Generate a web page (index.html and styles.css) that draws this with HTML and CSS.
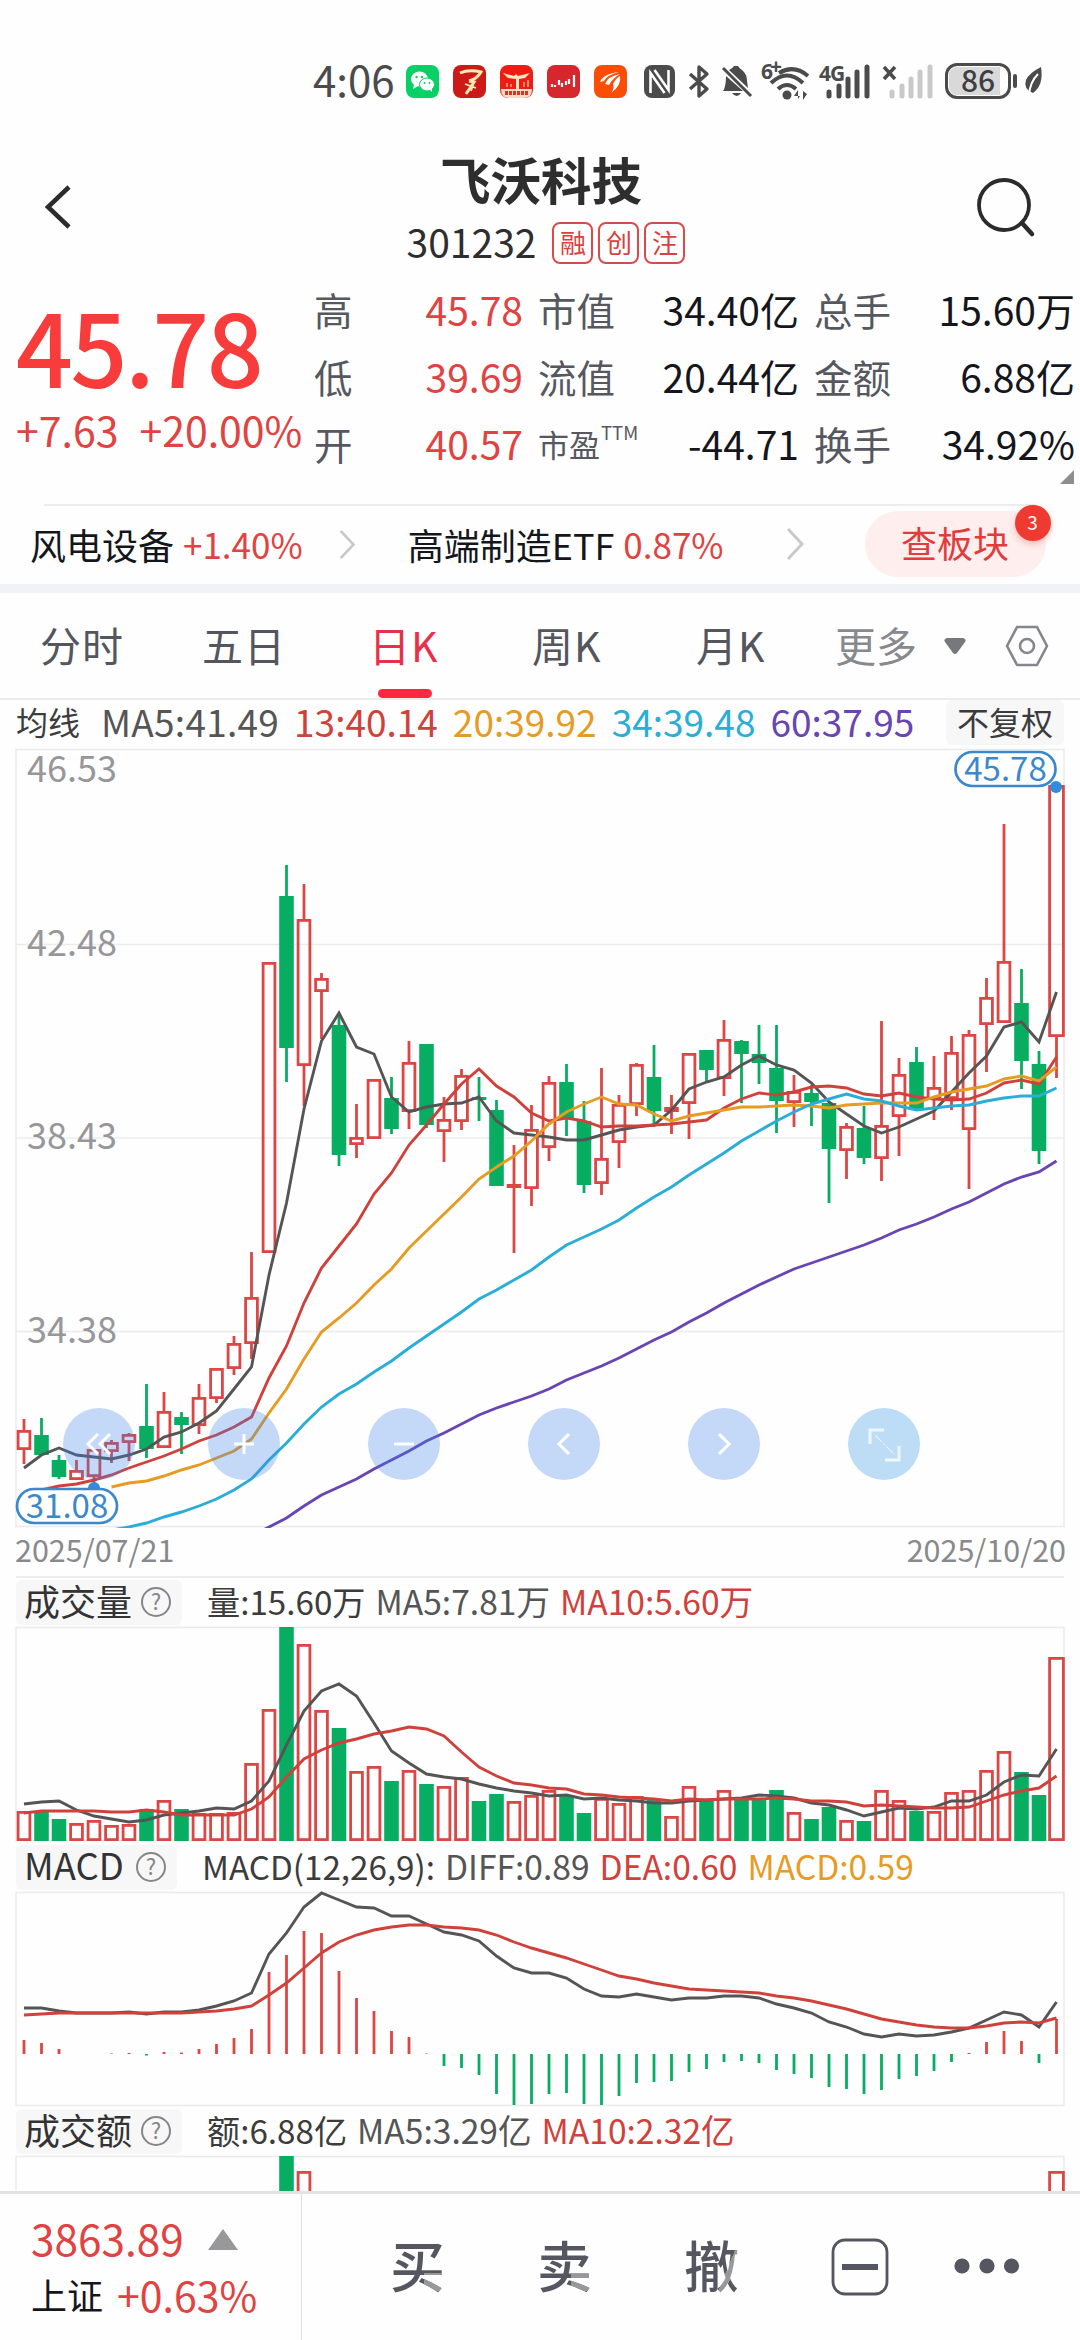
FILE: index.html
```html
<!DOCTYPE html>
<html lang="zh-CN">
<head>
  <meta charset="UTF-8">
  <meta name="viewport" content="width=device-width, initial-scale=1.0">
  <title>飞沃科技 301232</title>
  <link rel="stylesheet" href="styles.css">
</head>
<body>
  <div class="phone">
    <div class="status-bar">
      <span class="clock">4:06</span>
      <svg class="app-icon" viewBox="0 0 33 33"><rect width="33" height="33" rx="8" fill="#07d067"/><ellipse cx="13.500" cy="14" rx="8.500" ry="7.500" fill="#fff"/><path d="M8 19l-1 5 5-3z" fill="#fff"/><ellipse cx="21" cy="19.500" rx="7.500" ry="6.500" fill="#fff" stroke="#07d067"/><path d="M24 25l2 2 0-4z" fill="#fff"/><g fill="#07d067"><circle cx="10.500" cy="12" r="1.200"/><circle cx="16" cy="12" r="1.200"/><circle cx="18.500" cy="18" r="1"/><circle cx="23.500" cy="18" r="1"/></g></svg>
      <svg class="app-icon" viewBox="0 0 33 33"><rect width="33" height="33" rx="8" fill="#cb1a18"/><path d="M7 8q9-4 21-1-4 7-12 9M16 16l5 1-8 12" fill="none" stroke="#ffe9b0" stroke-width="3"/><path d="M12 19l11 4M21 17l-3 9" stroke="#ffe9b0" stroke-width="1.800"/></svg>
      <svg class="app-icon" viewBox="0 0 33 33"><rect width="33" height="33" rx="8" fill="#ee1c12"/><path d="M1 24h31q0 9-8 9H9q-8 0-8-9z" fill="#fbd9c8"/><path d="M3 8l11 3 2-2 2 2 12-3-5 5-6 1v10h-3V14l-8-1z" fill="#ffe4c0"/><path d="M5 28h23" stroke="#d8361f" stroke-width="4" stroke-dasharray="3 1"/><path d="M7 22v-4M11 22v-3M24 22v-5M28 22v-7" stroke="#fb8b6a" stroke-width="2"/></svg>
      <svg class="app-icon" viewBox="0 0 33 33"><rect width="33" height="33" rx="8" fill="#d8262e"/><path d="M5 22v-3M8 22v-2M12 20v-5M15 22v-4M19 20v-4M22 19v-5M27 22v-12" stroke="#fff" stroke-width="2.200"/></svg>
      <svg class="app-icon" viewBox="0 0 33 33"><rect width="33" height="33" rx="8" fill="#fb4d06"/><path d="M6 17q3-8 19-10q-12 3-15 9zM11 19q3-8 15-10q-7 4-11 11zM17 28q4-5 2-9 3-6 7-8 2 9-9 17z" fill="#fff"/></svg>
      <svg class="nfc" viewBox="0 0 31 33"><rect width="31" height="33" rx="8" fill="#4b4b4b"/><path d="M6.500 28V8l14 20M24.500 5v20L10.500 5" fill="none" stroke="#fff" stroke-width="2.600"/></svg>
      <svg class="bt" viewBox="0 0 22 33"><path d="M2 9l17 15-8 7V2l8 7L2 24" fill="none" stroke="#4b4b4b" stroke-width="3.400" stroke-linejoin="round"/></svg>
      <svg class="mute" viewBox="0 0 31 33"><path d="M8 5q4-2 5-4h4q1 2 4 4 5 4 5 11l1 7zM5 11l17 15H2q3-4 3-15zM11 28h9q-4 6-9 0z" fill="#4b4b4b"/><path d="M2 3l28 28" stroke="#4b4b4b" stroke-width="3"/></svg>
      <svg class="wifi" viewBox="0 0 49 37"><text x="0" y="16" class="net-label">6</text><text x="9" y="11" class="net-label">+</text><g fill="none" stroke="#4b4b4b" stroke-width="4"><path d="M18 10q15-9 29 3"/><path d="M10 20q16-15 32 0"/><path d="M17 26q9-8 18 0"/></g><circle cx="26" cy="32" r="4.500" fill="#4b4b4b"/><path d="M37 36v-9l-4 6h6M42 28v9l4-6z" fill="#4b4b4b"/></svg>
      <svg class="signal" viewBox="0 0 52 36"><text x="0" y="18" class="net-label">4G</text><path d="M10 33v-4M20 33V23M29 33V16M38 33V9M48 33V4" stroke="#4b4b4b" stroke-width="5" stroke-linecap="round"/></svg>
      <svg class="signal-off" viewBox="0 0 51 36"><path d="M2 4l11 12M13 4L2 16" stroke="#4b4b4b" stroke-width="3.500"/><path d="M10 33v-4M20 33V23M29 33V16M38 33V9M48 33V4" stroke="#c9c9c9" stroke-width="5" stroke-linecap="round"/></svg>
      <div class="battery"><span>86</span></div>
      <i class="battery-tip"></i>
      <svg class="leaf" viewBox="0 0 18 28"><path d="M17 0q3 18-8 26Q-1 22 2 13 5 6 17 0z" fill="#4b4b4b"/><path d="M14 7Q6 15 5 28" fill="none" stroke="#fff" stroke-width="2"/></svg>
    </div>

    <header class="title-bar">
      <svg class="back" viewBox="0 0 30 48"><path d="M26 4L5 24l21 20" fill="none" stroke="#2b2b2b" stroke-width="4.500"/></svg>
      <div class="title-block">
        <h1>飞沃科技</h1>
        <div class="code-row"><span class="code">301232</span><b>融</b><b>创</b><b>注</b></div>
      </div>
      <svg class="search" viewBox="0 0 60 60"><circle cx="27" cy="27" r="25" fill="none" stroke="#2b2b2b" stroke-width="3.800"/><path d="M45 45l10 11" stroke="#2b2b2b" stroke-width="4.500" stroke-linecap="round"/></svg>
    </header>

    <section class="quote">
      <div class="price-block">
        <div class="price">45.78</div>
        <div class="change"><span>+7.63</span><span>+20.00%</span></div>
      </div>
      <div class="stats">
        <span class="lab">高</span><span class="val up">45.78</span><span class="lab">市值</span><span class="val">34.40亿</span><span class="lab">总手</span><span class="val">15.60万</span>
        <span class="lab">低</span><span class="val up">39.69</span><span class="lab">流值</span><span class="val">20.44亿</span><span class="lab">金额</span><span class="val">6.88亿</span>
        <span class="lab">开</span><span class="val up">40.57</span><span class="lab small">市盈<sup>TTM</sup></span><span class="val">-44.71</span><span class="lab">换手</span><span class="val">34.92%</span>
      </div>
      <i class="corner"></i>
    </section>

    <section class="boards">
      <span class="board-name">风电设备</span><span class="board-pct">+1.40%</span>
      <svg class="arrow first" viewBox="0 0 20 34"><path d="M2 2l14 15L2 32" fill="none" stroke="#c9c9cb" stroke-width="3"/></svg>
      <span class="board-name">高端制造ETF</span><span class="board-pct">0.87%</span>
      <svg class="arrow second" viewBox="0 0 20 34"><path d="M2 2l14 15L2 32" fill="none" stroke="#c9c9cb" stroke-width="3"/></svg>
      <span class="board-btn">查板块<em>3</em></span>
    </section>

    <nav class="tabs">
      <span>分时</span><span>五日</span><span class="active">日K</span><span>周K</span><span>月K</span>
      <span class="more">更多</span>
      <svg class="caret" viewBox="0 0 22 16"><path d="M3 0h16q4 1 2 4l-8 11q-2 2-4 0L1 4Q-1 1 3 0z" fill="#77787e"/></svg>
      <svg class="hex" viewBox="0 0 44 42"><path d="M12 2h20l10 19-10 19H12L2 21z" fill="none" stroke="#85868b" stroke-width="2.600" stroke-linejoin="round"/><circle cx="22" cy="21" r="7" fill="none" stroke="#85868b" stroke-width="2.600"/></svg>
    </nav>

    <section class="ma-row">
      <span class="ma-title">均线</span>
      <span class="c5">MA5:41.49</span><span class="c13">13:40.14</span><span class="c20">20:39.92</span><span class="c34">34:39.48</span><span class="c60">60:37.95</span>
      <span class="adjust">不复权</span>
    </section>

    <section class="chart main-chart">
      <svg id="kline" viewBox="0 748 1080 782"></svg>
      <div class="controls">
        <span><svg viewBox="0 0 72 72"><path d="M35 26L25 36l10 10M47 26L37 36l10 10"/></svg></span>
        <span><svg viewBox="0 0 72 72"><path d="M36 26v20M26 36h20"/></svg></span>
        <span><svg viewBox="0 0 72 72"><path d="M26 36h20"/></svg></span>
        <span><svg viewBox="0 0 72 72"><path d="M41 26L31 36l10 10"/></svg></span>
        <span><svg viewBox="0 0 72 72"><path d="M31 26l10 10-10 10"/></svg></span>
        <span class="full"><svg viewBox="0 0 72 72"><path d="M22 36V22h14M37 52h14V38"/><path class="diag" d="M27 27l20 20"/></svg></span>
      </div>
    </section>

    <div class="dates"><span>2025/07/21</span><span>2025/10/20</span></div>

    <div class="ind-head">
      <span class="chip">成交量 <i>?</i></span>
      <span class="k">量:15.60万</span><span class="g">MA5:7.81万</span><span class="r">MA10:5.60万</span>
    </div>
    <section class="chart vol-chart"><svg id="volume" viewBox="0 1626 1080 217"></svg></section>

    <div class="ind-head">
      <span class="chip macd">MACD <i>?</i></span>
      <span class="k">MACD(12,26,9):</span><span class="g">DIFF:0.89</span><span class="r">DEA:0.60</span><span class="o">MACD:0.59</span>
    </div>
    <section class="chart macd-chart"><svg id="macd" viewBox="0 1890 1080 216"></svg></section>

    <div class="ind-head">
      <span class="chip">成交额 <i>?</i></span>
      <span class="k">额:6.88亿</span><span class="g">MA5:3.29亿</span><span class="r">MA10:2.32亿</span>
    </div>
    <section class="chart amt-chart"><svg id="amount" viewBox="0 2154 1080 36"></svg></section>

    <footer class="bottom-bar">
      <div class="index">
        <div class="index-row"><span class="up">3863.89</span><i class="tri"></i></div>
        <div class="index-row second"><span class="index-name">上证</span><span class="pct">+0.63%</span></div>
      </div>
      <div class="actions">
        <span class="act">买</span><span class="act">卖</span><span class="act plain">撤</span>
        <svg class="minus" viewBox="0 0 58 58"><rect x="2" y="2" width="54" height="54" rx="12" fill="none" stroke="#55565f" stroke-width="2.800"/><path d="M11 29h36" stroke="#55565f" stroke-width="6"/></svg>
        <svg class="dots" viewBox="0 0 66 18"><g fill="#55565f"><circle cx="8" cy="9" r="7.600"/><circle cx="33" cy="9" r="7.600"/><circle cx="57.500" cy="9" r="7.600"/></g></svg>
      </div>
    </footer>
  </div>
  <script src="chart.js"></script>
</body>
</html>
```
FILE: styles.css
```css
* {
  box-sizing: border-box;
}

body {
  margin: 0;
  background: #fefefe;
  font-family: "Noto Sans CJK SC", sans-serif;
  color: #15161c;
}

svg {
  display: block;
  flex: none;
}

i, em {
  font-style: normal;
}

.phone {
  width: 1080px;
  height: 2340px;
  overflow: hidden;
  display: flex;
  flex-direction: column;
}

.phone > * {
  flex: none;
}

/* status bar */
.status-bar {
  height: 136px;
  padding: 26px 0 0 313px;
  display: flex;
  align-items: center;
}

.status-bar svg {
  overflow: visible;
}

.clock {
  font-size: 42px;
  line-height: 50px;
  width: 93px;
  margin-top: -5px;
  color: #4b4b4b;
}

.app-icon {
  width: 33px;
  height: 33px;
  margin-right: 14px;
}

.nfc { width: 31px; height: 33px; margin-left: 3px; }
.bt { width: 22px; height: 33px; margin-left: 13px; }
.mute { width: 31px; height: 33px; margin-left: 11px; }
.wifi { width: 49px; height: 37px; margin-left: 9px; }
.signal { width: 52px; height: 36px; margin-left: 9px; }
.signal-off { width: 51px; height: 36px; margin-left: 11px; }

.net-label {
  font: 700 21px "Open Sans", sans-serif;
  fill: #4b4b4b;
  letter-spacing: -1px;
}

.battery {
  width: 66px;
  height: 36px;
  margin-left: 12px;
  border: 3px solid #4b4b4b;
  border-radius: 12px;
  background: linear-gradient(90deg, #d9d9d9 86%, #fff 86%);
  box-shadow: inset 0 0 0 1px #fff;
  color: #3f3f3f;
  font-size: 30px;
  font-weight: 500;
  line-height: 26px;
  text-align: center;
}

.battery-tip {
  width: 4px;
  height: 14px;
  margin-left: 2px;
  border-radius: 2px;
  background: #4b4b4b;
}

.leaf {
  width: 18px;
  height: 28px;
  margin-left: 7px;
}

/* title */
.title-bar {
  height: 144px;
  padding: 0 45px 0 43px;
  display: flex;
  justify-content: space-between;
}

.back {
  width: 30px;
  height: 48px;
  margin-top: 47px;
}

.search {
  width: 60px;
  height: 60px;
  margin: 42px -2px 0 0;
}

.title-block {
  display: flex;
  flex-direction: column;
  align-items: center;
  margin-right: -32px;
}

h1 {
  margin: 12px 0 0;
  font-size: 50.5px;
  line-height: 60px;
  font-weight: 700;
  color: #2e2e2e;
}

.code-row {
  display: flex;
  align-items: center;
  gap: 5px;
  margin-top: 14px;
  margin-left: 10px;
  height: 42px;
}

.code {
  font-size: 39px;
  line-height: 42px;
  margin: -4px 11px 0 0;
  color: #2e2e2e;
}

.code-row b {
  width: 41px;
  height: 42px;
  border: 2px solid #d94a4a;
  border-radius: 8px;
  color: #d94040;
  font-size: 26px;
  font-weight: 400;
  line-height: 35px;
  text-align: center;
}

/* quote */
.quote {
  position: relative;
  height: 224px;
  display: flex;
}

.price-block {
  flex: none;
  width: 314px;
  padding-left: 16px;
  color: #f83c3c;
}

.price {
  margin-top: 9px;
  font-size: 100px;
  line-height: 112px;
  font-weight: 500;
  letter-spacing: -2.5px;
}

.change {
  display: flex;
  gap: 21px;
  font-size: 41px;
  line-height: 52px;
  margin-top: 2px;
  color: #e04341;
}

.stats {
  flex: none;
  display: grid;
  grid-template-columns: 36px 188px 86px 190px 86px 180px;
  grid-auto-rows: 67px;
  height: 201px;
  margin-top: -4px;
  line-height: 67px;
}

.lab {
  font-size: 38.5px;
  color: #56585f;
  white-space: nowrap;
}

.lab.small {
  font-size: 31px;
}

.lab sup {
  margin-left: 1px;
  font-size: 18.5px;
  line-height: 0;
  vertical-align: 17px;
}

.val {
  font-size: 39px;
  text-align: right;
  padding-right: 15px;
  white-space: nowrap;
}

.val:nth-child(6n) {
  padding-right: 5px;
}

.up {
  color: #e04341;
}

.corner {
  position: absolute;
  right: 6px;
  bottom: 20px;
  border: 7.500px solid;
  border-color: transparent #8d8e93 #8d8e93 transparent;
}

/* boards */
.boards {
  position: relative;
  height: 89px;
  border-bottom: 9px solid #f1f2f7;
  padding-left: 30px;
  display: flex;
  align-items: center;
  font-size: 36px;
}

.boards::before {
  content: "";
  position: absolute;
  left: 44px;
  right: 44px;
  top: 0;
  height: 2px;
  background: #ededee;
}

.board-name {
  line-height: 44px;
  margin-top: -1px;
}

.board-pct {
  font-size: 35px;
  line-height: 44px;
  color: #e04341;
  margin: -1px 0 0 9px;
}

.arrow { width: 20px; height: 34px; }
.arrow.first { margin: 0 50px 0 35px; height: 31px; }
.arrow.second { margin: 0 59px 0 62px; }

.board-btn {
  position: relative;
  width: 181px;
  height: 66px;
  border-radius: 33px;
  background: #ffeeee;
  color: #e23b3b;
  text-align: center;
  line-height: 62px;
}

.board-btn em {
  position: absolute;
  right: -5px;
  top: -6px;
  width: 36px;
  height: 36px;
  border-radius: 50%;
  background: #ee3a31;
  box-shadow: 0 3px 6px rgba(238, 58, 49, 0.3);
  color: #fff;
  font-size: 19px;
  line-height: 34px;
}

/* tabs */
.tabs {
  height: 107px;
  padding: 0 28px 0 40px;
  border-bottom: 2px solid #ececed;
  display: grid;
  grid-template-columns: 162px 163px 167px 164px 139px 109px 61px 46px;
  align-items: center;
  font-size: 41px;
  color: #54565e;
}

.tabs span {
  line-height: 50px;
  margin-top: -3px;
  letter-spacing: 1px;
}

.tabs .active {
  position: relative;
  color: #e9304a;
  margin-left: 4px;
}

.tabs .active::after {
  content: "";
  position: absolute;
  left: 9px;
  top: 70px;
  width: 54px;
  height: 9px;
  border-radius: 5px;
  background: #ff2742;
}

.tabs .more {
  color: #88898d;
  letter-spacing: 0;
}

.caret { width: 22px; height: 16px; }
.hex { width: 44px; height: 42px; }

/* moving averages legend */
.ma-row {
  height: 48px;
  padding: 0 16px 4px;
  display: flex;
  align-items: center;
  gap: 15px;
  font-size: 37px;
  line-height: 40px;
}

.ma-row span {
  margin-top: -2px;
  white-space: nowrap;
}

.ma-row .ma-title {
  font-size: 32px;
  margin-right: 6px;
  color: #3c3c3c;
}

.ma-row .c5 {
  letter-spacing: 0.25px;
}

.ma-row .adjust {
  margin: 0 0 0 auto;
  width: 118px;
  height: 45px;
  border-radius: 6px;
  background: #f7f7f8;
  font-size: 32px;
  line-height: 42px;
  text-align: center;
  color: #3c3c3c;
}

.c5 { color: #555; }
.c13 { color: #d0413b; }
.c20 { color: #e69b22; }
.c34 { color: #2aadd6; }
.c60 { color: #6845b3; }

/* charts */
.chart {
  position: relative;
}

.chart svg text {
  font-family: "Noto Sans CJK SC", sans-serif;
}

.main-chart { height: 782px; }
.vol-chart { height: 217px; }
.macd-chart { height: 216px; }
.amt-chart { height: 36px; }

.axis { font-size: 36px; fill: #97979a; }
.tag { font-size: 33px; fill: #3d88cc; }

.controls {
  position: absolute;
  left: 63px;
  top: 660px;
  display: flex;
  gap: 88px;
}

.controls span {
  width: 72px;
  height: 72px;
  border-radius: 50%;
  background: rgba(62, 134, 235, 0.3);
}

.controls span:first-child {
  margin-right: -15px;
}

.controls .full {
  background: rgba(40, 145, 228, 0.3);
}

.controls path {
  fill: none;
  stroke: #fff;
  stroke-width: 3;
}

.controls .full path {
  stroke-opacity: 0.75;
}

.controls .full .diag {
  stroke-width: 1.2;
  stroke-opacity: 0.6;
  stroke-dasharray: 10 2 2 2;
}

.dates {
  height: 46px;
  margin: 0 14px 0 15px;
  display: flex;
  justify-content: space-between;
  font-size: 30.5px;
  line-height: 38px;
  color: #88898c;
}

/* indicator headers */
.ind-head {
  height: 48px;
  margin: 0 16px;
  display: flex;
  align-items: center;
  gap: 10px;
  font-size: 33.6px;
  line-height: 40px;
  white-space: nowrap;
}

.dates + .ind-head {
  height: 50px;
  border-top: 2px solid #ededee;
}

.ind-head > span {
  margin-top: -3px;
}

.ind-head .chip {
  width: 166px;
  height: 45px;
  margin: 0 15px 0 0;
  padding: 0 11px 4px 8px;
  border-radius: 6px;
  background: #f7f7f8;
  display: flex;
  align-items: center;
  justify-content: space-between;
  font-size: 36px;
  line-height: 40px;
  color: #333;
}

.ind-head .macd {
  width: 161px;
  margin-right: 15px;
  font-size: 36.5px;
}

.chip i {
  width: 30px;
  height: 30px;
  margin-top: 4px;
  border: 2px solid #85868a;
  border-radius: 50%;
  color: #85868a;
  font-size: 22px;
  line-height: 23px;
  text-align: center;
}

.k { color: #3c3c3c; font-size: 33.2px; }
.g { color: #555; }
.r { color: #d0413b; }
.o { color: #e69b22; }

/* bottom bar */
.bottom-bar {
  height: 150px;
  border-top: 3px solid #e2e2e3;
  background: #fefefe;
  display: flex;
}

.index {
  width: 302px;
  border-right: 1px solid #dededf;
  padding: 18px 0 0 31px;
}

.index-row {
  display: flex;
  align-items: center;
  font-size: 42.3px;
  line-height: 52px;
}

.index-row.second {
  margin-top: 4px;
  font-size: 36px;
}

.pct {
  margin-left: 14px;
  font-size: 41px;
  color: #e04341;
}

.tri {
  margin: 3px 0 0 24px;
  border: 15.500px solid transparent;
  border-top: 0;
  border-bottom: 21px solid #98989a;
}

.actions {
  display: flex;
  align-items: center;
  padding-left: 88px;
}

.act {
  width: 56px;
  height: 80px;
  margin: -9px 91px 0 0;
  font-size: 55px;
  line-height: 80px;
  font-weight: 500;
  color: transparent;
  background: linear-gradient(#98989b, #98989b) 34px 50px / 22px 18px no-repeat, linear-gradient(#55565f, #55565f);
  -webkit-background-clip: text;
  background-clip: text;
}

.act.plain {
  background: linear-gradient(112deg, #55565f 70%, #98989b 70%, #98989b 78%, #55565f 78%);
  -webkit-background-clip: text;
  background-clip: text;
}

.minus { width: 58px; height: 58px; margin-top: -2px; }
.dots { width: 66px; height: 18px; margin: -3px 0 0 65px; }
```
FILE: chart.js
```js
const RED = '#dc4644';
const GREEN = '#07ae62';
const DARK = '#555';
const LINE_RED = '#d0413b';

// x of the n-th trading day
const px = i => 24 + i * 17.5;

// [color, high, body top, body bottom, low]
const candles = [
  ['r', 1419, 1430, 1450, 1464], ['g', 1418, 1435, 1455, 1455], ['g', 1455, 1460, 1477, 1479], ['r', 1460, 1470, 1480, 1480],
  ['r', 1449, 1449, 1477, 1487], ['r', 1440, 1442, 1452, 1463], ['r', 1433, 1434, 1443, 1461], ['g', 1384, 1426, 1449, 1458],
  ['r', 1392, 1411, 1448, 1448], ['g', 1412, 1417, 1425, 1454], ['r', 1384, 1397, 1426, 1434], ['r', 1368, 1368, 1399, 1403],
  ['r', 1336, 1343, 1369, 1375], ['r', 1252, 1297, 1344, 1359], ['r', 962, 962, 1253, 1253], ['g', 865, 896, 1048, 1082],
  ['r', 884, 919, 1066, 1106], ['r', 973, 978, 992, 1039], ['g', 1015, 1025, 1155, 1166], ['r', 1104, 1137, 1145, 1158],
  ['r', 1079, 1079, 1139, 1139], ['g', 1077, 1098, 1129, 1134], ['r', 1041, 1062, 1112, 1129], ['g', 1044, 1044, 1125, 1128],
  ['r', 1097, 1119, 1132, 1162], ['r', 1069, 1075, 1122, 1130], ['g', 1077, 1097, 1100, 1121], ['g', 1100, 1110, 1186, 1186],
  ['r', 1145, 1184, 1188, 1253], ['r', 1105, 1129, 1189, 1206], ['r', 1076, 1082, 1148, 1161], ['g', 1064, 1082, 1118, 1136],
  ['g', 1101, 1121, 1185, 1193], ['r', 1068, 1158, 1184, 1195], ['r', 1095, 1104, 1143, 1168], ['r', 1063, 1064, 1105, 1116],
  ['g', 1045, 1077, 1111, 1127], ['r', 1095, 1107, 1112, 1134], ['r', 1053, 1053, 1104, 1139], ['g', 1050, 1050, 1070, 1081],
  ['r', 1020, 1039, 1079, 1096], ['g', 1040, 1041, 1054, 1103], ['g', 1025, 1054, 1063, 1084], ['g', 1025, 1068, 1101, 1133],
  ['r', 1075, 1091, 1103, 1127], ['g', 1085, 1093, 1102, 1126], ['g', 1103, 1103, 1149, 1203], ['r', 1123, 1126, 1151, 1179],
  ['g', 1106, 1128, 1158, 1164], ['r', 1021, 1125, 1159, 1181], ['r', 1058, 1074, 1117, 1156], ['g', 1047, 1062, 1109, 1109],
  ['r', 1056, 1087, 1100, 1120], ['r', 1036, 1052, 1099, 1110], ['r', 1030, 1034, 1130, 1189], ['r', 978, 997, 1025, 1072],
  ['r', 824, 961, 1023, 1023], ['g', 969, 1003, 1061, 1089], ['g', 1051, 1064, 1151, 1164], ['r', 785, 785, 1037, 1078]
];

const ma5 = [1468, 1455, 1448, 1455, 1457, 1459, 1455, 1449, 1437, 1432, 1423, 1411, 1389, 1367, 1275, 1203, 1109, 1041, 1013, 1047,
  1054, 1097, 1112, 1107, 1104, 1103, 1097, 1121, 1133, 1135, 1137, 1140, 1140, 1135, 1130, 1127, 1125, 1110, 1089, 1082,
  1077, 1065, 1056, 1065, 1070, 1083, 1102, 1114, 1126, 1133, 1127, 1119, 1111, 1092, 1073, 1056, 1027, 1022, 1042, 992];
const ma13 = [1490, 1486, 1484, 1480, 1475, 1468, 1462, 1456, 1449, 1441, 1435, 1427, 1417, 1378, 1346, 1303, 1268, 1246, 1224,
  1194, 1173, 1145, 1125, 1104, 1084, 1069, 1086, 1097, 1113, 1121, 1118, 1121, 1127, 1126, 1126, 1125, 1124, 1122, 1120,
  1108, 1099, 1093, 1095, 1092, 1087, 1086, 1088, 1094, 1096, 1093, 1097, 1099, 1100, 1099, 1093, 1083, 1080, 1084, 1057];
const ma20 = [1487, 1483, 1481, 1476, 1470, 1465, 1458, 1451, 1439, 1413, 1389, 1359, 1332, 1318, 1303,
  1285, 1269, 1248, 1231, 1214, 1197, 1179, 1167, 1156, 1141, 1124, 1112, 1104, 1097, 1104, 1105, 1114, 1121, 1116, 1113,
  1110, 1107, 1107, 1106, 1105, 1106, 1108, 1105, 1104, 1103, 1103, 1103, 1097, 1092, 1089, 1086, 1079, 1076, 1081, 1067];
const ma34 = [1530, 1527, 1523, 1517, 1512, 1506, 1499, 1490, 1479, 1460, 1443, 1424, 1407, 1394, 1384,
  1372, 1361, 1348, 1336, 1324, 1312, 1299, 1290, 1280, 1270, 1257, 1245, 1237, 1229, 1220, 1208, 1197, 1187, 1175, 1164,
  1153, 1141, 1131, 1121, 1112, 1104, 1099, 1094, 1099, 1101, 1106, 1110, 1108, 1106, 1105, 1101, 1098, 1096, 1096, 1088];
const ma60 = [1536, 1527, 1518, 1506, 1495, 1487, 1479, 1469, 1460, 1451, 1441, 1433, 1424, 1415, 1408, 1402, 1396, 1389, 1380, 1373,
  1366, 1358, 1349, 1340, 1332, 1322, 1313, 1303, 1294, 1285, 1277, 1269, 1263, 1257, 1251, 1245, 1238, 1230, 1224, 1217,
  1209, 1202, 1193, 1184, 1177, 1172, 1161];

const volTops = [1811, 1812, 1819, 1823, 1820, 1825, 1824, 1809, 1800, 1809, 1813, 1813, 1812, 1763, 1709, 1627, 1644, 1710, 1728, 1771,
  1766, 1781, 1770, 1784, 1786, 1777, 1801, 1794, 1801, 1795, 1790, 1796, 1813, 1798, 1803, 1796, 1800, 1816, 1786, 1799,
  1790, 1799, 1798, 1790, 1812, 1819, 1807, 1820, 1821, 1790, 1800, 1811, 1811, 1792, 1790, 1770, 1751, 1772, 1795, 1657];
const vol5 = [1804, 1802, 1801, 1810, 1816, 1819, 1822, 1820, 1815, 1813, 1811, 1808, 1809, 1801, 1781, 1745, 1711, 1691, 1684, 1696,
  1723, 1751, 1763, 1774, 1777, 1779, 1784, 1788, 1791, 1793, 1796, 1795, 1799, 1798, 1800, 1801, 1803, 1803, 1801, 1800,
  1799, 1798, 1795, 1796, 1798, 1803, 1805, 1810, 1816, 1812, 1808, 1809, 1807, 1801, 1801, 1795, 1782, 1775, 1776, 1749];
const vol10 = [1813, 1811, 1811, 1811, 1811, 1812, 1812, 1810, 1812, 1815, 1815, 1815, 1815, 1809, 1797, 1777, 1759, 1750, 1743, 1739,
  1734, 1731, 1727, 1729, 1736, 1752, 1767, 1776, 1783, 1785, 1788, 1789, 1794, 1795, 1797, 1798, 1799, 1801, 1799, 1800,
  1799, 1799, 1799, 1798, 1799, 1801, 1801, 1802, 1806, 1805, 1806, 1807, 1808, 1808, 1807, 1801, 1795, 1791, 1788, 1776];

const hist = [2039, 2042, 2048, 2053, 2053, 2052.5, 2052, 2054.5, 2051, 2051.5, 2048, 2043, 2037, 2028, 1971, 1954, 1930, 1932, 1970, 1997,
  2010, 2030, 2036, 2052.5, 2065, 2067, 2074, 2093, 2104, 2103, 2093, 2092, 2103, 2104, 2095, 2082, 2081, 2080, 2071, 2068,
  2061, 2060, 2062, 2069, 2073, 2077, 2086, 2088, 2093, 2089, 2078, 2075, 2070, 2061, 2052, 2041, 2030, 2040, 2062, 2018];
const diff = [2007, 2007, 2010, 2012, 2012, 2012, 2011, 2013, 2011, 2011, 2009, 2005, 2000, 1992, 1953, 1932, 1906, 1892, 1899, 1906,
  1907, 1915, 1915, 1923, 1931, 1934, 1940, 1955, 1967, 1972, 1972, 1977, 1988, 1995, 1996, 1993, 1996, 1999, 1997, 1997,
  1995, 1995, 1997, 2003, 2007, 2012, 2021, 2026, 2033, 2036, 2033, 2035, 2034, 2031, 2027, 2019, 2011, 2014, 2026, 2001];
const dea = [2014, 2013, 2012, 2012, 2012, 2012, 2012, 2012, 2012, 2012, 2011, 2010, 2008, 2005, 1994, 1982, 1967, 1952, 1941, 1934,
  1929, 1926, 1924, 1924, 1926, 1927, 1929, 1934, 1941, 1947, 1952, 1957, 1963, 1969, 1975, 1978, 1982, 1985, 1988, 1989,
  1990, 1991, 1992, 1995, 1997, 2000, 2004, 2008, 2013, 2018, 2021, 2024, 2026, 2027, 2027, 2025, 2022, 2021, 2022, 2017];

function rect(x, y, w, h, fill, stroke, sw) {
  return `<rect x="${x}" y="${y}" width="${w}" height="${h}" fill="${fill}" stroke="${stroke || 'none'}" stroke-width="${sw || 0}"/>`;
}

function seg(x1, y1, x2, y2, color, w) {
  return `<line x1="${x1}" y1="${y1}" x2="${x2}" y2="${y2}" stroke="${color}" stroke-width="${w}"/>`;
}

function curve(values, color, w = 2.9) {
  const start = 60 - values.length;
  const points = values.map((y, i) => `${px(start + i)},${y}`).join(' ');
  return `<polyline points="${points}" fill="none" stroke="${color}" stroke-width="${w}"/>`;
}

function frame(top, bottom) {
  return rect(16, top, 1048, bottom - top, 'none', '#ebebec', 1.5);
}

function bar(color, i, top, bottom) {
  const x = px(i);
  const half = i === 59 ? 8.3 : 7.3;
  if (color === 'g') return rect(x - half, top, half * 2, bottom - top, GREEN);
  return rect(x - half + 1.4, top + 1.4, half * 2 - 2.8, Math.max(bottom - top - 2.8, 1), 'none', RED, 2.8);
}

function drawKline() {
  let s = frame(749.5, 1526.5);
  [944.5, 1138, 1331.5].forEach(y => { s += seg(16, y, 1064, y, '#ececed', 1.5); });
  [['46.53', 782], ['42.48', 956], ['38.43', 1149], ['34.38', 1343]].forEach(([t, y]) => {
    s += `<text x="27" y="${y}" class="axis">${t}</text>`;
  });
  candles.forEach(([c, high, top, bottom, low], i) => {
    const color = c === 'r' ? RED : GREEN;
    if (high < top) s += seg(px(i), high, px(i), top, color, 2.8);
    if (low > bottom) s += seg(px(i), bottom, px(i), low, color, 2.8);
    s += bar(c, i, top, bottom);
  });
  s += '<clipPath id="plot"><rect x="16" y="749" width="1050" height="779"/></clipPath><g clip-path="url(#plot)">';
  s += curve(ma5, DARK) + curve(ma13, LINE_RED) + curve(ma20, '#e69b22') + curve(ma34, '#2aadd6') + curve(ma60, '#6845b3');
  s += '</g><circle cx="94" cy="1488" r="6" fill="#2f8ce0"/>';
  [[955.5, 752, '45.78'], [17, 1489, '31.08']].forEach(([x, y, t]) => {
    s += `<rect x="${x}" y="${y}" width="100" height="34" rx="17" fill="#fff" fill-opacity=".95" stroke="#3d88cc" stroke-width="2.7"/>`;
    s += `<text x="${x + 50}" y="${y + 29}" text-anchor="middle" class="tag">${t}</text>`;
  });
  s += '<circle cx="1056" cy="787" r="6" fill="#2f8ce0"/>';
  document.getElementById('kline').innerHTML = s;
}

function drawVolume() {
  let s = frame(1627.5, 1840.5);
  volTops.forEach((y, i) => { s += bar(candles[i][0], i, y, 1841); });
  s += curve(vol5, DARK) + curve(vol10, LINE_RED);
  document.getElementById('volume').innerHTML = s;
}

function drawMacd() {
  const zero = 2053;
  let s = frame(1891.5, 2104.5);
  hist.forEach((y, i) => { s += seg(px(i), zero, px(i), y, y < zero ? RED : GREEN, 2.8); });
  s += curve(diff, DARK) + curve(dea, LINE_RED);
  document.getElementById('macd').innerHTML = s;
}

function drawAmount() {
  document.getElementById('amount').innerHTML =
    frame(2155.5, 2368) + bar('g', 15, 2155, 2368) + bar('r', 16, 2170, 2368) + bar('r', 59, 2170, 2368);
}

drawKline();
drawVolume();
drawMacd();
drawAmount();
```
